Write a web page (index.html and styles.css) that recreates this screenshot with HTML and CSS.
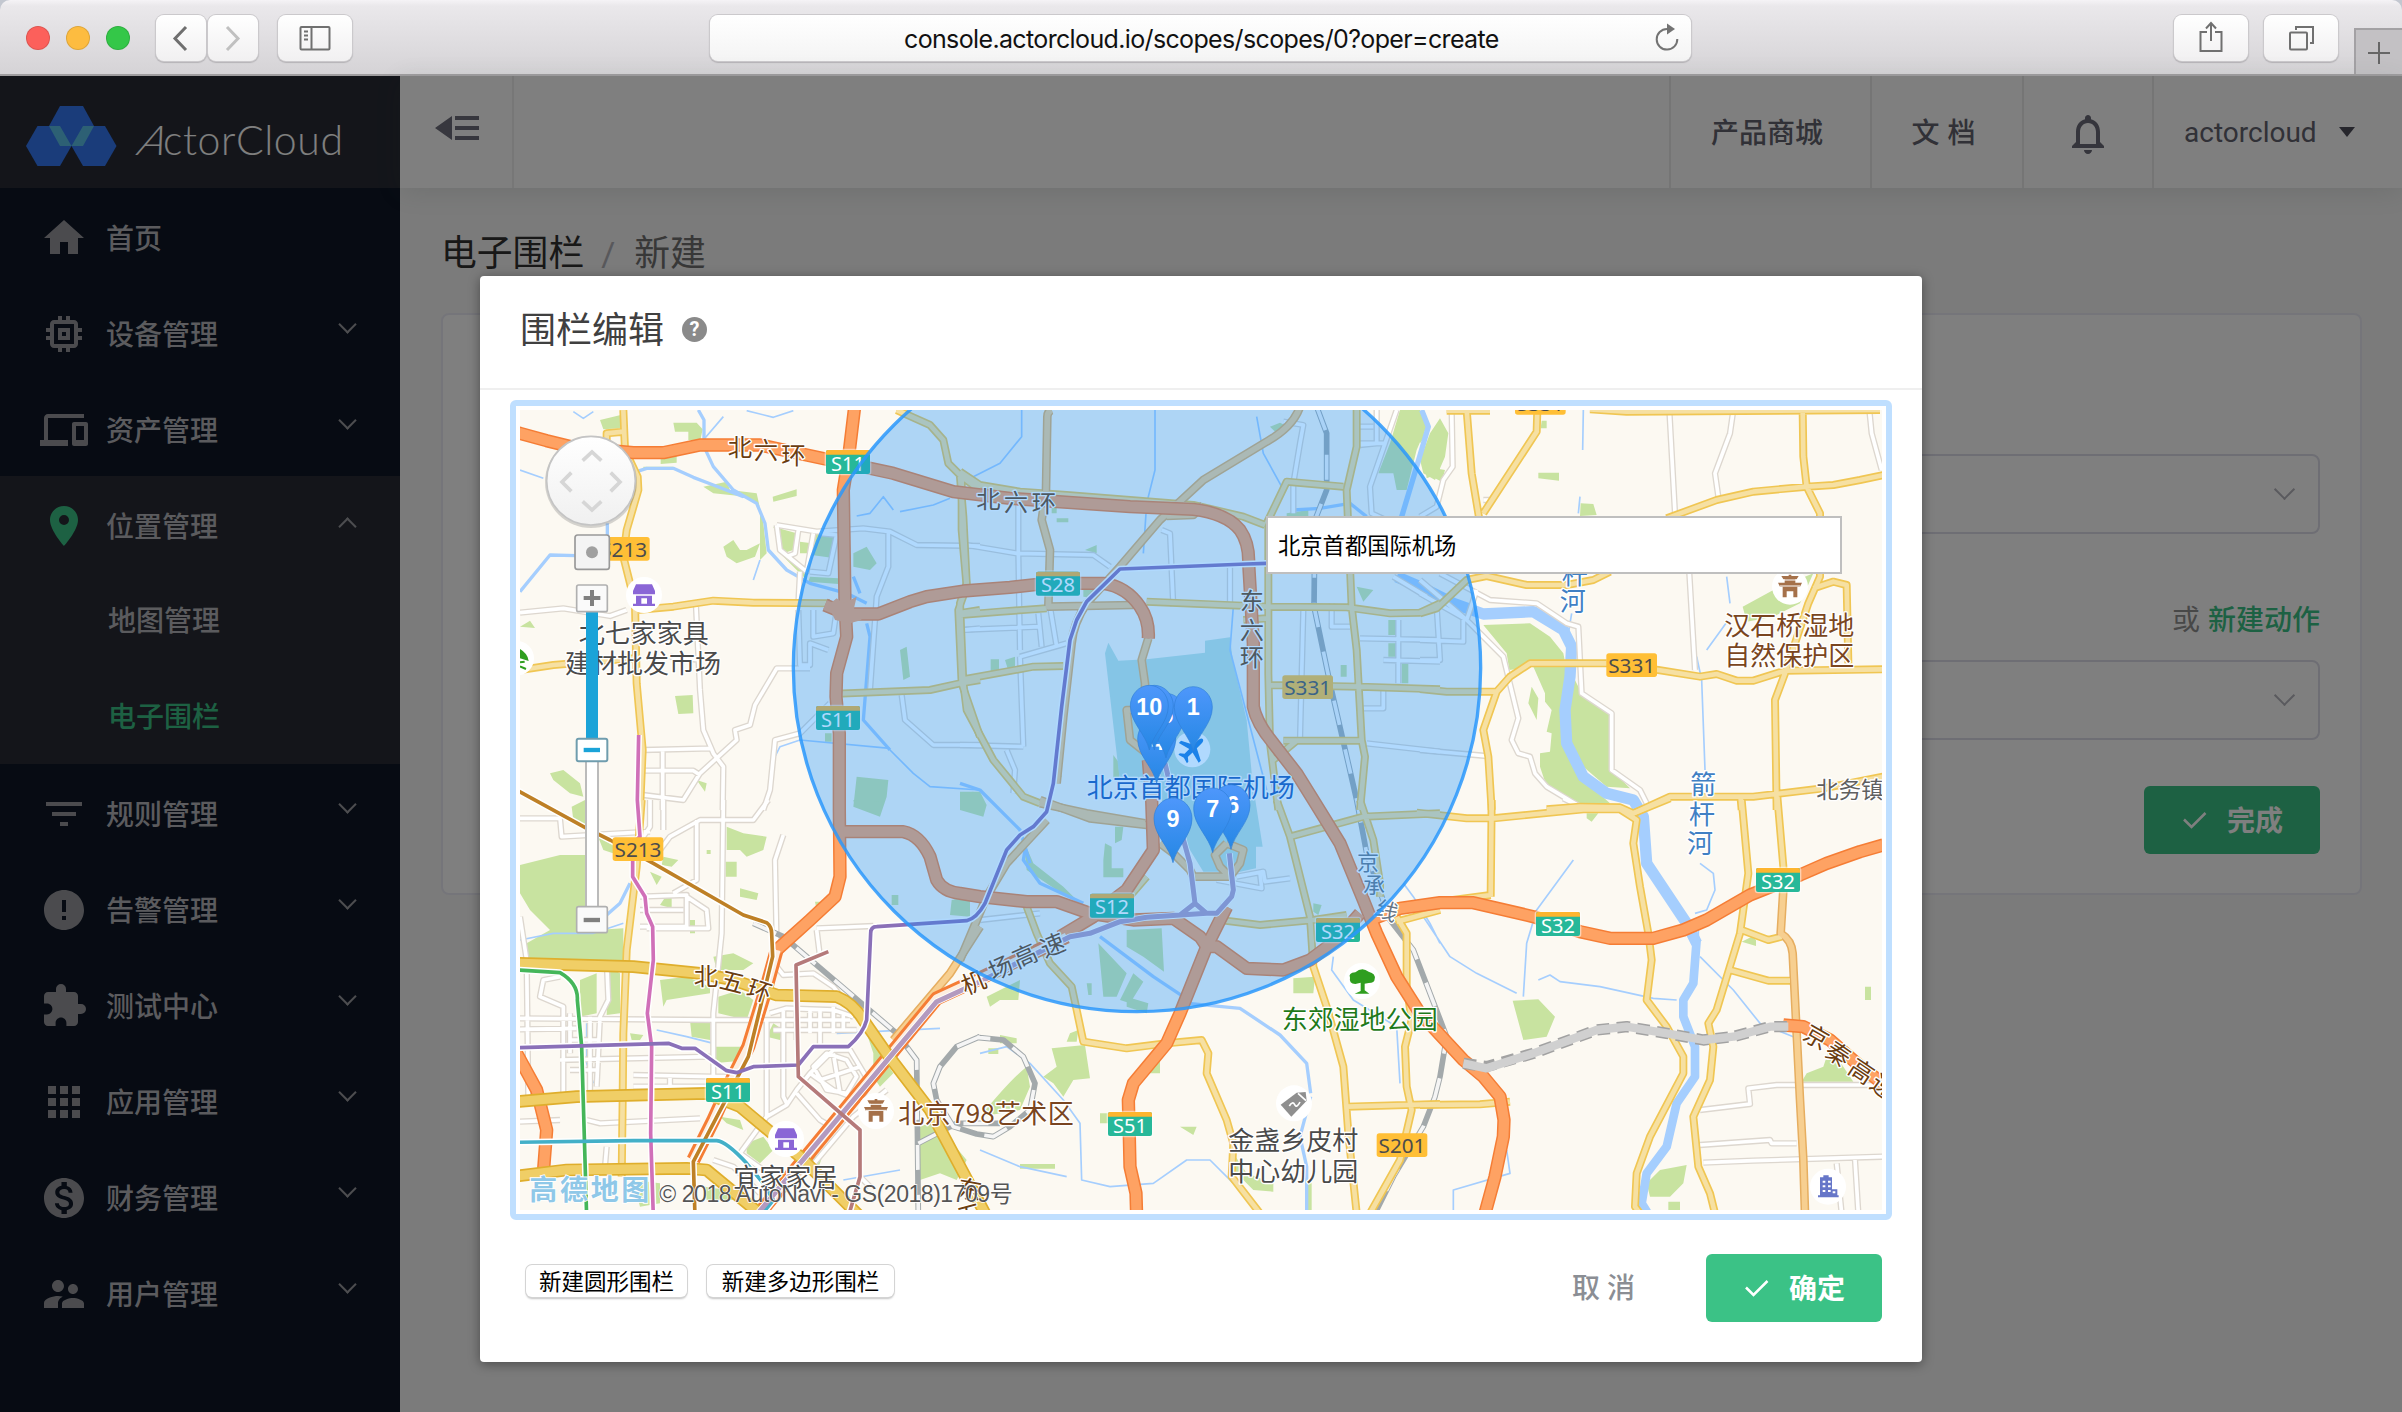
FILE: index.html
```html
<!DOCTYPE html>
<html lang="zh-CN">
<head>
<meta charset="utf-8">
<title>ActorCloud</title>
<link rel="stylesheet" href="styles.css">
</head>
<body>
<div class="window">
<header class="chrome">
  <div class="lights"><i class="red"></i><i class="amber"></i><i class="green"></i></div>
  <div class="nav-pair">
    <span class="cbtn back"><svg width="50" height="46" fill="none" stroke="#6f6f6f" stroke-width="3"><path d="M30 12 19 23.500 30 35"/></svg></span>
    <span class="cbtn"><svg width="50" height="46" fill="none" stroke="#c0c0c0" stroke-width="3"><path d="M19 12 30 23.500 19 35"/></svg></span>
  </div>
  <span class="cbtn side"><svg width="74" height="46" fill="none" stroke="#707070" stroke-width="2"><rect x="22.500" y="12" width="29" height="22.500" rx="1"/><path d="M33.500 12v22M26 16.500h4M26 20.500h4M26 24.500h4"/></svg></span>
  <div class="address"><span class="url">console.actorcloud.io/scopes/scopes/0?oper=create</span>
    <svg class="reload" width="26" height="30" fill="none" stroke="#737373" stroke-width="2"><path d="M12 6A10.300 10.300 0 1 0 22.300 16"/><path d="M12 .5v11l8-5.500z" fill="#737373" stroke="none"/></svg>
  </div>
  <div class="chrome-right">
    <span class="cbtn side"><svg width="74" height="46" fill="none" stroke="#707070" stroke-width="2"><path d="M33 17h-6.500v19h21V17H41M37 26V8M32 13.500 37 8l5 5.500"/></svg></span>
    <span class="cbtn side"><svg width="74" height="46" fill="none" stroke="#707070" stroke-width="2"><rect x="26" y="17.500" width="17" height="17" rx="1"/><path d="M32 15v-3h17v16h-3"/></svg></span>
  </div>
  <span class="newtab"><svg width="46" height="46" stroke="#666" stroke-width="2"><path d="M12 23h22M23 12v22"/></svg></span>
</header>

<div class="app">
  <aside class="sidebar">
    <div class="brand">
      <svg width="400" height="112">
        <g fill="#3478f5"><path d="M49 50 60 30H83L94 50 83 70H60Z"/><path d="M26 70 37.500 50H60L71.500 70 60 90H37.500Z"/><path d="M71.500 70 83 50H105L116.500 70 105 90H83Z"/></g>
        <path d="M49 50H60L71.500 70H60ZM94 50H83L71.500 70H83Z" fill="#5ac0e8"/>
        <g class="wordmark"><text x="135" y="79" transform="skewX(-24) translate(35 0)">A</text><text x="163" y="79" textLength="180">ctorCloud</text></g>
      </svg>
    </div>
    <nav class="menu">
      <a class="item"><svg class="ic" viewBox="0 0 24 24"><path d="M10 20v-6h4v6h5v-8h3L12 3 2 12h3v8z"/></svg><span>首页</span></a>
      <a class="item"><svg class="ic" viewBox="0 0 24 24"><path d="M15 9H9v6h6V9zm-2 4h-2v-2h2v2zm8-2V9h-2V7c0-1.100-.9-2-2-2h-2V3h-2v2h-2V3H9v2H7c-1.100 0-2 .9-2 2v2H3v2h2v2H3v2h2v2c0 1.100.9 2 2 2h2v2h2v-2h2v2h2v-2h2c1.100 0 2-.9 2-2v-2h2v-2h-2v-2h2zm-4 6H7V7h10v10z"/></svg><span>设备管理</span><i class="chev"></i></a>
      <a class="item"><svg class="ic" viewBox="0 0 24 24"><path d="M4 6h18V4H4c-1.100 0-2 .9-2 2v11H0v3h14v-3H4V6zm19 2h-6c-.55 0-1 .45-1 1v10c0 .55.45 1 1 1h6c.55 0 1-.45 1-1V9c0-.55-.45-1-1-1zm-1 9h-4v-7h4v7z"/></svg><span>资产管理</span><i class="chev"></i></a>
      <div class="open">
        <a class="item"><svg class="ic on" viewBox="0 0 24 24"><path d="M12 2C8.130 2 5 5.130 5 9c0 5.250 7 13 7 13s7-7.750 7-13c0-3.870-3.130-7-7-7zm0 9.500a2.500 2.500 0 1 1 0-5 2.500 2.500 0 0 1 0 5z"/></svg><span>位置管理</span><i class="chev up"></i></a>
        <a class="item sub">地图管理</a>
        <a class="item sub current">电子围栏</a>
      </div>
      <a class="item"><svg class="ic" viewBox="0 0 24 24"><path d="M10 18h4v-2h-4v2zM3 6v2h18V6H3zm3 7h12v-2H6v2z"/></svg><span>规则管理</span><i class="chev"></i></a>
      <a class="item"><svg class="ic" viewBox="0 0 24 24"><path d="M12 2C6.480 2 2 6.480 2 12s4.480 10 10 10 10-4.480 10-10S17.520 2 12 2zm1 15h-2v-2h2v2zm0-4h-2V7h2v6z"/></svg><span>告警管理</span><i class="chev"></i></a>
      <a class="item"><svg class="ic" viewBox="0 0 24 24"><path d="M20.500 11H19V7c0-1.100-.9-2-2-2h-4V3.500a2.500 2.500 0 0 0-5 0V5H4c-1.100 0-1.990.9-1.990 2v3.800H3.500c1.490 0 2.700 1.210 2.700 2.700s-1.210 2.700-2.700 2.700H2V20c0 1.100.9 2 2 2h3.800v-1.500c0-1.490 1.210-2.700 2.700-2.700s2.700 1.210 2.700 2.700V22H17c1.100 0 2-.9 2-2v-4h1.500a2.500 2.500 0 0 0 0-5z"/></svg><span>测试中心</span><i class="chev"></i></a>
      <a class="item"><svg class="ic" viewBox="0 0 24 24"><path d="M4 8h4V4H4v4zm6 12h4v-4h-4v4zm-6 0h4v-4H4v4zm0-6h4v-4H4v4zm6 0h4v-4h-4v4zm6-10v4h4V4h-4zm-6 4h4V4h-4v4zm6 6h4v-4h-4v4zm0 6h4v-4h-4v4z"/></svg><span>应用管理</span><i class="chev"></i></a>
      <a class="item"><svg class="ic" viewBox="0 0 24 24"><path d="M12 2C6.480 2 2 6.480 2 12s4.480 10 10 10 10-4.480 10-10S17.520 2 12 2zm1.410 16.090V20h-2.670v-1.930c-1.710-.36-3.160-1.460-3.270-3.400h1.960c.1 1.050.82 1.870 2.650 1.870 1.960 0 2.400-.98 2.400-1.590 0-.83-.44-1.610-2.670-2.140-2.480-.6-4.180-1.620-4.180-3.670 0-1.720 1.390-2.840 3.110-3.210V4h2.670v1.950c1.860.45 2.790 1.860 2.850 3.390H14.300c-.05-1.110-.64-1.870-2.220-1.870-1.500 0-2.400.68-2.400 1.640 0 .84.65 1.390 2.670 1.910s4.180 1.390 4.180 3.910c-.01 1.830-1.380 2.830-3.120 3.160z"/></svg><span>财务管理</span><i class="chev"></i></a>
      <a class="item"><svg class="ic" viewBox="0 0 24 24"><path d="M16.500 12c1.380 0 2.490-1.120 2.490-2.500S17.880 7 16.500 7 14 8.120 14 9.500s1.120 2.500 2.500 2.500zM9 11c1.660 0 2.990-1.340 2.990-3S10.660 5 9 5 6 6.340 6 8s1.340 3 3 3zm7.500 3c-1.830 0-5.500.92-5.500 2.750V19h11v-2.250c0-1.830-3.670-2.750-5.500-2.750zM9 13c-2.330 0-7 1.170-7 3.500V19h7v-2.250c0-.85.33-2.340 2.370-3.470C10.500 13.100 9.660 13 9 13z"/></svg><span>用户管理</span><i class="chev"></i></a>
    </nav>
  </aside>

  <div class="main">
    <div class="topbar">
      <span class="fold"><svg width="44" height="24" fill="#6e6e7c"><path d="M0 12 17 0V24Z M20 0h24v4H20ZM20 10h24v4H20ZM20 20h24v4H20Z"/></svg></span>
      <a class="cell shop">产品商城</a>
      <a class="cell docs">文 档</a>
      <a class="cell bell"><svg width="48" height="48" viewBox="0 0 24 24" fill="#6a6a78"><path d="M12 22c1.100 0 2-.9 2-2h-4c0 1.100.9 2 2 2zm6-6v-5c0-3.070-1.630-5.640-4.500-6.320V4c0-.83-.67-1.500-1.500-1.500s-1.500.67-1.500 1.500v.68C7.640 5.360 6 7.920 6 11v5l-2 2v1h16v-1l-2-2zm-2 1H8v-6c0-2.480 1.510-4.500 4-4.500s4 2.020 4 4.500v6z"/></svg></a>
      <a class="cell user">actorcloud<i class="caret"></i></a>
    </div>
    <div class="page">
      <h1 class="crumb">电子围栏<em>/</em><span>新建</span></h1>
      <section class="card">
        <div class="select"><i class="chev"></i></div>
        <p class="hint">或 <b>新建动作</b></p>
        <div class="select"><i class="chev"></i></div>
        <button class="primary"><svg width="24" height="18" fill="none" stroke="#fff" stroke-width="2.500"><path d="M1 8.500 8.500 16 22.500 2"/></svg><span>完成</span></button>
      </section>
    </div>
  </div>

  <div class="shade">
  <div class="modal">
    <div class="modal-head"><span>围栏编辑</span><i class="help">?</i></div>
    <div class="frame">
<svg class="map" viewBox="60 60 4086 2400" width="1362" height="800">
<defs>
<linearGradient id="pinfill" x2="0" y2="1"><stop offset="0" stop-color="#4e97fb"/><stop offset="1" stop-color="#2587e4"/></linearGradient>
<linearGradient id="knob" x2="0" y2="1"><stop offset="0" stop-color="#fff"/><stop offset="1" stop-color="#f0f0f0"/></linearGradient>
<g id="pin"><path d="M0 132C-10 85-57 50-57 0A57 62 0 0 1 57 0C57 50 10 85 0 132Z" fill="url(#pinfill)" stroke="#2f7fd8" stroke-width="2"/></g>
<g id="gs"><rect x="-4" y="-4" width="140" height="80" rx="10" fill="#fff" opacity=".5"/><rect width="132" height="72" rx="6" fill="#27b899"/><path d="M0 14V6Q0 0 6 0H126Q132 0 132 6V14Z" fill="#fdb52f"/></g>
<g id="ys"><rect width="152" height="71" rx="8" fill="#ffbf36"/></g>
<g id="shop"><circle r="54" fill="#fff"/><path d="M-24-32H24L33-12V-2H-33V-12ZM-24 2H24V26H33V33H-33V26H-24ZM-8 10V26H9V10Z" fill="#8a66d6" fill-rule="evenodd"/></g>
<g id="temple"><circle r="54" fill="#fff"/><path d="M-26-32H-4V-36H4V-32H26L20-22H16V-12H36L30 0H22V32H10V14H-10V32H-22V0H-30L-36-12H-16V-22H-20Z" fill="#a5714a"/><path d="M-30-2H30M-20-20H20" stroke="#fff" stroke-width="3"/></g>
<g id="minor">
<path d="M60 668 190 655 330 678 380 660M588 650 600 900 610 1020 640 1090 670 1130 668 1260M930 835H830L765 945 750 1005 705 1020 710 1050 600 1150 550 1230 430 1215M430 1080 635 1075M488 1080V1260M430 1142H580L600 1155M990 940 900 1030 825 1050 810 1200 790 1260M830 405 950 425 1090 415 1170 425 1250 465 1440 468M830 405 840 480 920 545 940 430M900 545 895 640M895 420 885 490 860 500M960 430 1010 435 985 550 930 545M1165 425V530L1130 620 1110 900M940 660V740L1000 730 1010 660M895 660 900 825H930V760L985 780M1440 715 1390 720M1205 915 1215 990 1300 1065H1440M510 800 600 810"/>
<path transform="translate(1380 0)" d="M20 465 170 490 400 495 450 530M175 340V490L180 780M605 420 630 430 640 650M810 530V640M0 720 240 710M180 800 320 760M180 800 190 1070M270 650 290 770M235 670 245 770M0 1065 190 1070M140 1080 165 1140 160 1210M970 95 1030 105 1020 160 1000 280V370M1250 60V160L1200 165M1200 110H1240M1280 160H1200M1310 60 1230 290 1235 370 1300 400M1030 660 1020 1050M1115 640V710H1170M1200 745 1440 750M1270 810 1440 815M1315 690V880M1200 955H1270V900M1220 1060 1440 1085M1300 560 1400 620"/>
<path transform="translate(2760 0)" d="M95 60 98 230 70 270 50 350 0 380M748 60 765 370M940 60 930 130 885 250 895 320M1348 60 1355 130 1385 240M808 550 825 840M0 570 140 690 250 800 295 985 275 1050 295 1090 330 1100 345 1150 380 1190 480 1250M60 550 210 630 350 640 440 700 475 710 485 910 575 970V1140L660 1200 685 1250M0 1080 200 1098M190 330H215M0 610 140 690 170 600M50 650 60 810H0M130 690V755L0 750"/>
<path transform="translate(0 1230)" d="M60 55H180L185 110 450 95M450 0V80L430 110M490 0V90M590 60V240L520 280M480 150 510 110 600 60H760L805 0M670 0 665 400 640 640V830M60 350 80 480 85 900M420 290 560 285V380H420M420 330H550M560 290 620 330 625 385H440M60 655 640 660H850M60 688 230 685M400 825 640 830H700M400 860H640M510 830V880M180 780 630 770M320 480 325 600 300 650 290 860M180 530 130 540 120 590 190 620V900M210 640V760M270 650V880M210 720H300M210 810H290M850 105 825 180 830 430M830 500 850 525 940 520 1000 560 1070 650M810 640 860 625 1000 630 1060 650M820 660H1050M820 690H1070M850 625V890L860 910M890 625V720M930 625V700M960 630V740M1000 620V700M1030 640V690M950 390 960 470M950 385 1120 378M800 660V950L860 915 890 870 930 820 1000 750 1050 750 1110 850 1080 900 1000 870 930 820M890 880 960 960 1010 990M940 800 980 760 1040 780 1070 830 1040 880 980 870ZM960 840 1080 800M1000 760 1020 880M60 965 180 960M260 960 300 970 600 955M320 1040 315 1100M800 950 720 1060 790 1110M900 1140 1060 950 1160 870M640 1080 700 1100 780 1180M1080 1130 1110 1160"/>
<path transform="translate(1380 1230)" d="M60 360 240 340M830 230 910 215 915 245 990 235M770 240 905 265 900 220"/>
<path transform="translate(2760 1230)" d="M840 930 990 912 985 865 1070 855H1390M840 1035 1050 1020 1055 1030H1130M850 1088 1000 1082 1390 1070M1250 1090 1265 1240M1305 1080 1315 1240M430-5 480 20"/>
</g>
<g id="second">
<path d="M370 60 375 180 413 260 415 300 380 420 370 500 405 640 410 880 428 1080 420 1260M320 170V130L370 125M410 660 520 650 640 632 760 638 990 640M60 840 160 825 400 805M1190 60 1290 105 1330 150 1345 220 1385 260 1440 300M1385 250V420L1400 590 1375 660 1385 880 1440 1040M1375 670 1440 660M990 912 1290 900 1380 880 1440 870"/>
<path transform="translate(1380 0)" d="M0 245 60 285 180 305 320 315 700 345 850 380 915 405M0 260 10 380 20 580 0 640 10 880 20 960 100 1110 190 1220 240 1240M0 675 120 665 260 655M560 635 920 650 1160 652 1290 670 1380 668 1440 640M0 870 220 830 310 828M1190 60V170L1160 300 1175 650 1190 780 1205 1050 1215 1100 1200 1260M920 400 980 275 1150 290M925 400V850L930 1060 955 1260M850 690 920 685M920 885 1200 890 1440 898M970 1052H1205M1010 1052 940 1110"/>
<path transform="translate(2760 0)" d="M140 60 155 250 180 400M352 60 350 125 190 370M80 62H210M510 58 620 65 1380 60M740 385 890 330 1000 305 1160 290 1240 285 1320 270 1390 255M1148 60 1150 200 1160 290 1200 370V560L1165 640 1095 850 1065 930 1070 1260M1180 595 1240 575 1280 585 1285 820M0 670 50 655 140 570 200 558 320 585H440L520 570 570 545M0 897 80 905H230M560 820H330L270 860 230 905 190 1020 205 1100 215 1260M560 820 715 840 840 860 890 852 950 872H1000L1095 842 1390 838M380 1258 480 1250 600 1252 640 1270 750 1220H1000L1210 1195 1390 1160M962 1225 965 1260"/>
<path transform="translate(0 1230)" d="M425 0 410 200 380 450 370 700 368 900 365 1130"/>
<path transform="translate(1380 1230)" d="M200 320 230 400 270 490 335 560 350 630 370 725 500 745 620 730 725 720 745 760 740 820 800 960 820 1030 815 1130 900 1240M950 0 990 110 1050 350 1060 500 1100 620 1150 800 1165 1000 1190 1240M990 110 1210 50 1440 40M780 360 900 375 1060 360 1160 345M1200 0 1240 120 1260 250V290M1310 350 1340 400V560L1355 660 1335 740 1340 860 1355 930 1320 1080 1230 1240M1160 920 1440 912M1310 365 1440 330M500 300 560 230"/>
<path transform="translate(2760 1230)" d="M-10 38 140 55H220L490 28H600L650 60 640 130 660 260 685 400 695 480 680 600 740 680 790 770V820L690 1010 650 1120 645 1220 660 1240M215 0 212 290M60 305 212 285M640 40 750-5M965 0 985 220 960 400 890 630 865 670 880 740 870 840 820 950 835 1100 870 1180 885 1240M1072-10 1090 200V270M965 390 1045 420 1085 410M930 510 1045 542H1110M0 915 180 913 270 905"/>
</g>
<g id="third">
<path transform="translate(1380 0)" d="M275 60Q262 65 262 80L258 300 245 390 270 480 265 650 520 645M1020 50Q1000 110 920 155L730 270 600 390 480 530 380 640Q340 700 335 760L310 980 290 1180M620 378 700 375 730 345M565 745 545 810 555 880V960H500L510 1050 560 1090M240 1240 380 1270 555 1300"/>
<path transform="translate(1380 1230)" d="M240 0 390 55 560 75M0 480 80 290 140 190 260 60M600 130 640 160 690 210 700 230H820M800 130 765 165 780 200 810 230 840 190 850 150 800 130"/>
<path transform="translate(0 1230)" d="M1440 380 1350 520 1180 720"/>
<path transform="translate(2760 1230)" d="M1090 270 1082 400Q1115 420 1118 460L1130 700 1140 900 1150 1080 1155 1240"/>
</g>
<g id="ring">
<path d="M50 1720 400 1730 600 1750 700 1770 830 1815 1010 1820Q1060 1840 1090 1890L1160 1990 1290 2160 1460 2480M50 2135 230 2120 620 2110 720 2150 900 2300 1080 2480M50 2358 200 2340 560 2335 620 2340 790 2480"/>
</g>
<g id="express">
<path d="M0 118 60 130 140 152 220 172 400 188H490L600 165H780L860 182 980 208 1110 235 1180 250 1360 305 1530 325 1890 350 2080 358Q2180 370 2220 420 2248 460 2246 520L2260 760V950Q2270 1000 2320 1060L2390 1150 2440 1230 2520 1360 2590 1530 2630 1630 2690 1760 2760 1870 2890 2010 2950 2060 3000 2120 3012 2190 3010 2240 2985 2360 2955 2470"/>
<path d="M1064 50 1046 200 1030 300 1035 640 1040 740 1010 850 1008 920 1018 1030V1260L1020 1460 1005 1520 930 1590 830 1680"/>
<path d="M975 645 1040 672H1135L1230 635 1280 620 1390 603 1530 592 1640 580H1810Q1880 590 1920 650 1948 690 1945 745"/>
<path d="M1030 1325H1210Q1260 1335 1290 1400L1310 1470Q1330 1505 1380 1510L1440 1520 1580 1535H1670L1770 1570 1900 1590 2020 1585 2100 1640 2120 1670"/>
<path d="M1945 1110 1955 1230 1960 1380 1880 1500 1840 1530 1780 1580 1680 1640"/>
<path d="M2180 1550 2120 1670 2040 1870 2000 1960 1900 2080 1885 2130 1888 2240 1890 2330 1908 2410 1910 2480M2110 1670H2150L2240 1735 2350 1740 2430 1710 2510 1650 2580 1570"/>
<path d="M2610 1590 2700 1555 2820 1538H2920L3100 1580 3240 1625 3330 1645H3460L3550 1620 3620 1590 3750 1515 3900 1455 3980 1420 4080 1385 4150 1365"/>
<path d="M50 1990 110 2100 140 2220 130 2350M3850 1905 3910 1910 3990 1950 4070 2020 4160 2090"/>
</g>
<g id="dual"><path d="M830 1680 800 1790 745 1970 690 2080 640 2190 580 2310M770 2480 1310 1825 1440 1765 1700 1640"/></g>
<g id="rail">
<path d="M2450 50 2480 130V300L2445 390 2442 650 2490 880 2570 1230 2600 1390 2670 1590 2740 1680 2840 1940 2820 2060 2805 2120 2770 2210 2680 2360 2620 2480M760 1600 850 1640 1190 1930 1250 2010 1255 2480M1440 1940 1370 1970 1320 2030 1300 2080 1310 2130 1360 2210 1430 2232 1480 2240 1530 2210 1590 2160 1605 2080 1570 2000 1510 1950 1430 1942M1255 2260 1370 2200 1500 2200"/>
</g>
</defs>
<rect x="60" y="60" width="4086" height="2400" fill="#fcf9f2"/>
<g fill="#c8e3a0">
<path d="M300 90 362 75V115L310 118ZM520 98H590L608 118 600 155 565 150V125H525ZM482 198 530 190V218L482 222ZM610 290 680 275 690 300 770 310 790 400 800 490 780 510V350L740 320 640 310ZM818 320 890 298V318L820 335ZM670 470 700 450 720 480H740L780 460 765 500 710 520 680 500ZM820 410 890 430 880 480 850 490ZM840 490 870 500 920 540V570ZM900 455 935 460 925 490H900ZM945 430H1005V505L935 495ZM1060 490 1100 470 1130 520 1110 540 1060 530ZM525 918 578 915 580 970 535 972ZM150 1150 190 1140 240 1180 250 1220 210 1210 160 1170ZM60 710 90 692 105 714ZM590 1170 620 1180 615 1205ZM1070 1160 1165 1170 1160 1220 1140 1280 1060 1250ZM1380 1210 1420 1205 1450 1255 1380 1260ZM1200 780 1220 770 1230 860 1210 870ZM930 560 1015 565V582L925 575ZM430 240H520V230H430ZM975 1030H995V1055H975Z"/>
<path transform="translate(1380 0)" d="M1320 60H1380L1400 110 1370 180 1340 300 1310 300 1300 250H1255L1290 160ZM1390 200 1440 150V250L1400 265ZM930 110 960 98 980 108 950 130ZM275 350H290V370H275ZM290 385H325V397H290ZM92 808H117V848H92ZM135 810 165 800V830L145 842ZM1285 690H1310V735H1285ZM1285 760H1307V800H1285ZM1325 820H1345V880H1325ZM1142 825H1160V860H1142ZM375 480 410 465V490ZM460 1095 475 1115 480 1185 460 1165ZM0 1205H60L80 1245 70 1280 0 1260ZM1190 590 1240 600 1210 635ZM570 628H635V640H570ZM370 600 410 590V625L370 620ZM980 370 1045 360V380H980ZM295 1110 305 1160 290 1180Z"/>
<path transform="translate(2760 0)" d="M190 705 330 700 390 740 430 790 440 840 425 960 440 1090 480 1160 570 1240 470 1250 380 1190 360 1130V1090L390 1085 395 1030 380 1025 395 960 375 935V910L340 830 268 840 260 790ZM460 860 490 920 570 970 575 1140 630 1195 560 1190 490 1130 450 1050 445 960ZM335 890 355 925 350 990 325 940ZM60 85 85 130 75 200 45 270 10 250 0 210 30 130ZM45 235 75 240 65 275 45 265ZM0 90 15 140 0 160ZM355 248H417V272L355 265ZM482 340 520 342 530 375 480 378ZM968 650 1060 600 1180 550 1140 640 1060 680 980 695ZM365 92H380V115H362Z"/>
<path transform="translate(0 1230)" d="M60 195 180 165H255V370L290 390 370 385V480H80V430L150 390 90 330 60 280ZM215 20 255 0V80L220 60ZM290 100 340 120 370 170 310 150ZM680 80 730 100 800 110 790 150 740 170 720 150H680ZM677 185H710V230H677ZM720 265 775 280 770 300 720 290ZM500 285H515V325L480 315ZM570 360H585V400H570ZM450 215 485 230 470 255ZM490 170 535 180 515 200 485 195ZM945 305H975L950 330ZM480 540 560 530 630 560V580L500 600 490 620ZM570 660H630V720L575 710ZM655 590 720 570 760 600 740 660 655 640ZM820 670 850 690 840 720 800 710ZM240 540 290 520V640L240 650ZM325 500 360 520V640L320 645ZM390 700 430 705 420 720H395ZM640 470 700 460 760 490 730 510H650ZM1100 700 1180 820 1140 860 1120 830V760ZM660 950 720 960 730 990 680 970ZM740 1030 790 1010 820 1050 780 1090 740 1060ZM920 1080 970 1060 950 1120ZM1060 0 1145 5 1140 45 1065 20ZM1175 285H1195V315H1175ZM1355 300 1410 290V350L1350 345ZM1260 980 1310 960 1350 1020 1400 1080 1370 1140 1320 1120 1260 1140ZM640 740H760L750 780 640 790ZM400 1140 480 1150V1210L420 1220ZM620 150H632V162H620ZM615 1160 680 1170 700 1200H620Z"/>
<path transform="translate(1380 1230)" d="M275 745 375 735 390 835 340 840 310 890 280 850 250 830 290 800ZM200 800 210 860 180 930 60 950Q150 840 200 800ZM80 590 180 540 175 600 120 600 90 620ZM120 705 170 715V730H120ZM330 700 355 690 350 725H320ZM85 745H115V762H85ZM500 390 605 385 612 515 550 470 500 440ZM415 430 500 520 470 590 430 590ZM520 520 550 545 510 610 480 600ZM500 590 565 610 560 640 500 620ZM190 120 220 190 310 260 360 310 290 270 200 210ZM465 80H490L485 120 465 130ZM435 130 455 140V205H490V232H430V180ZM1000 535 1065 530 1060 580H1000ZM570 780H600V820H565ZM660 980H710L700 1005ZM420 940H445V970H420ZM820 1060 860 1120 940 1150V1175L880 1170 820 1110ZM180 1092H285V1106H180ZM1060 310 1085 315 1075 345 1060 335ZM1035 1150H1055V1240H1035ZM380 550H395V585H385Z"/>
<path transform="translate(2760 1230)" d="M278 602 355 598 405 650 380 710 310 720ZM470 0H550L510 20ZM500 40H535L515 65 500 55ZM965 425 995 410 1008 420V438ZM1335 560H1353V600H1335ZM1145 845 1160 820 1210 800 1230 740 1300 845ZM680 1150 720 1110 800 1095 790 1150 750 1190H690ZM745 1205H780V1235H745Z"/>
</g>
<path d="M1815 790 1825 758 1855 812 1940 808 2115 788V752L2190 742 2198 810 2240 990 2258 1180 2288 1370H2268V1435L2220 1445H2110L2070 1380 2010 1260 1940 1180 1858 1160Z" fill="#bee1db"/>
<g fill="none" stroke="#a5cefe" stroke-linejoin="round">
<path stroke-width="34" d="M2690 560 2760 590 2860 640 2950 672 3100 665 3190 720 3215 770 3210 860 3195 960 3200 1060 3250 1160 3320 1210 3400 1230 3430 1280 3440 1420 3500 1510 3560 1600 3590 1660"/>
<path stroke-width="26" d="M3590 1650 3580 1780 3550 1830V1880L3585 1970V2060L3530 2140 3500 2270 3440 2350 3425 2440 3450 2480"/>
<path stroke-width="16" d="M2765 60 2785 110 2750 230 2705 380"/>
<path stroke-width="10" d="M595 60 612 90V170L640 230 700 300 770 340 795 400 805 480 860 540 930 580 1040 610 1100 640M1100 700 1110 740 1090 990 1170 1080M410 245 440 235H520L580 262 640 285 730 320M1060 560 1080 610M2065 1840 2220 1855 2340 1935 2420 2020 2432 2110M1800 1640 1960 1760 2050 1820M1580 1350 1570 1410 1620 1480 1750 1540M1380 1180 1440 1200 1560 1320 1590 1420M2380 360 2460 355 2550 340 2600 380M60 605 150 495 230 497M322 400V440M320 1575 360 1540 390 1480M2432 2120 2400 2240 2420 2330V2470"/>
<path stroke-width="5" d="M220 65 250 85 280 65M610 150 670 80M740 62 820 82 880 62M1070 378 1110 370 1150 320 1180 360M1200 365 1300 345 1350 325M60 240 130 265M760 570 780 510M1170 1080 1240 1150 1290 1190 1440 1200M60 1650 160 1630 280 1630 370 1600M820 1110 840 1070 900 1050 1170 1075M1565 60V140L1500 220 1420 260M1965 60V240L1940 340 1930 490M2270 80 2290 190 2345 290M2200 650 2190 780 2300 1200M3250 60 3248 180M3240 320 3235 370M3215 670 3205 730M3680 560 3690 640M3685 690 3620 780M3590 800 3605 870 3615 1140M3600 1420 3640 1450 3645 1500 3620 1560 3585 1570M3220 1410 3110 1560 3080 1660 3070 1820M2770 1580 2850 1700 2930 1750 3050 1810M3115 1770 3150 1755 3180 1775 3300 1790 3460 1825 3530 1830M3600 1700 3700 1800 3780 1900 3880 1940M3595 1600V1700M3020 2280 3030 2350 2860 2400V2470M1440 1990 1520 1970 1590 2020 1690 2130 1740 2200 1745 2370 1830 2390 1960 2380 2060 2310H2130L2210 2390M1440 2280 1560 2330 1700 2360M2500 1700 2495 1740 2560 1830 2690 1910 2700 2080M2710 1480 2740 1520 2790 1600 2820 1660M470 1920 560 1940 640 1960M1010 1930 1320 1915M260 1900V2020L280 2080M1030 2370 1200 2340"/>
</g>
<use href="#minor" class="ln minor-case"/><use href="#minor" class="ln minor-core"/>
<use href="#rail" class="ln rail-case"/><use href="#rail" class="ln rail-core"/>
<use href="#second" class="ln second-case"/><use href="#third" class="ln third-case"/>
<use href="#second" class="ln second-core"/><use href="#third" class="ln third-core"/>
<use href="#express" class="ln ex-case"/><use href="#dual" class="ln dual-case"/>
<use href="#express" class="ln ex-core"/><use href="#dual" class="ln dual-core"/>
<use href="#ring" class="ln ring-case"/><use href="#ring" class="ln ring-core"/>
<path d="M985 645 1010 625 1030 640 1070 620 1062 655 1085 690 1050 700 1005 690Z" fill="#fea263"/>
<g class="ln"><path d="M2890 2020 2960 2030 3100 1990 3290 1920 3380 1910 3500 1930 3610 1950 3700 1940 3810 1910H3865" stroke="#a2a2a2" stroke-width="34" stroke-dasharray="38 22"/><path d="M2890 2020 2960 2035 3100 1990 3290 1920 3380 1910 3500 1930 3610 1950 3700 1940 3810 1910H3865" stroke="#d0d0d0" stroke-width="25"/></g>
<g class="ln" stroke="#fff" stroke-width="20">
<path d="M50 1200 260 1315 330 1350 460 1420 730 1575 800 1598Q815 1610 815 1630L818 1700 745 2000 580 2315 585 2480"/>
<path d="M416 1035 412 1230 420 1340 398 1360V1460L435 1520 440 1570 458 1610 460 1710 442 1870 455 1970 452 2230 460 2480"/>
<path d="M50 1740 180 1748Q235 1780 232 1830L245 1970 260 2480"/>
<path d="M50 1973 505 1960 545 1975H585L680 2042 710 2048 760 2030 895 2025 940 1970H1045Q1090 1930 1100 1890L1112 1630Q1112 1610 1130 1610L1400 1592Q1430 1585 1455 1540L1520 1380 1560 1335 1600 1310 1640 1265 1660 1180 1685 950 1710 750 1730 690 1760 635 1860 537 2240 522 2300 520"/>
<path d="M50 2257 400 2252H650Q680 2255 740 2320L790 2380 820 2430 780 2480"/>
<path d="M985 1685 888 1725 895 2060 1080 2220V2360L1045 2480"/>
<path d="M765 2480 1310 1835 1440 1775 1710 1640 1770 1630 1860 1595 1940 1582 2120 1570H2150L2195 1520 2200 1500 2188 1390M2040 1575 2085 1540 2120 1570M2085 1540 2070 1420 2045 1330 1995 1120"/>
</g>
<g fill="none" stroke-linejoin="round" stroke-width="11">
<path stroke="#be8026" d="M50 1200 260 1315 330 1350 460 1420 730 1575 800 1598Q815 1610 815 1630L818 1700 745 2000 580 2315 585 2480"/>
<path stroke="#d070b8" d="M416 1035 412 1230 420 1340 398 1360V1460L435 1520 440 1570 458 1610 460 1710 442 1870 455 1970 452 2230 460 2480"/>
<path stroke="#45b65a" d="M50 1740 180 1748Q235 1780 232 1830L245 1970 260 2480"/>
<path stroke="#8a70b8" d="M50 1973 505 1960 545 1975H585L680 2042 710 2048 760 2030 895 2025 940 1970H1045Q1090 1930 1100 1890L1112 1630Q1112 1610 1130 1610L1400 1592Q1430 1585 1455 1540L1520 1380 1560 1335 1600 1310 1640 1265 1660 1180 1685 950 1710 750 1730 690 1760 635 1860 537 2240 522 2300 520"/>
<path stroke="#43b0c8" d="M50 2257 400 2252H650Q680 2255 740 2320L790 2380 820 2430 780 2480"/>
<path stroke="#b39abf" stroke-width="15" d="M765 2480 1310 1835 1440 1775 1710 1640 1770 1630 1860 1595 1940 1582 2120 1570H2150L2195 1520 2200 1500 2188 1390M2040 1575 2085 1540 2120 1570M2085 1540 2070 1420 2045 1330 1995 1120"/>
<path stroke="#b57a7a" d="M985 1685 888 1725 895 2060 1080 2220V2360L1045 2480"/>
</g>
<g class="gsh">
<g transform="translate(978 180)"><use href="#gs"/><text x="66" y="62">S11</text></g>
<g transform="translate(948 948)"><use href="#gs"/><text x="66" y="62">S11</text></g>
<g transform="translate(618 2064)"><use href="#gs"/><text x="66" y="62">S11</text></g>
<g transform="translate(1608 545)"><use href="#gs"/><text x="66" y="62">S28</text></g>
<g transform="translate(1770 1511)"><use href="#gs"/><text x="66" y="62">S12</text></g>
<g transform="translate(2448 1584)"><use href="#gs"/><text x="66" y="62">S32</text></g>
<g transform="translate(1824 2166)"><use href="#gs"/><text x="66" y="62">S51</text></g>
<g transform="translate(3108 1566)"><use href="#gs"/><text x="66" y="62">S32</text></g>
<g transform="translate(3768 1434)"><use href="#gs"/><text x="66" y="62">S32</text></g>
</g>
<g class="ysh">
<g transform="translate(297 441)"><use href="#ys"/><text x="74" y="59">S213</text></g>
<g transform="translate(338 1342)"><use href="#ys"/><text x="76" y="59">S213</text></g>
<g transform="translate(2347 856)"><use href="#ys"/><text x="76" y="59">S331</text></g>
<g transform="translate(3319 790)"><use href="#ys"/><text x="76" y="59">S331</text></g>
<g transform="translate(2630 2230)"><use href="#ys"/><text x="76" y="59">S201</text></g>
<g transform="translate(3045 3)"><use href="#ys"/><text x="76" y="59">S331</text></g>
</g>
<g class="lb road">
<text x="720" y="198">北</text><text x="798" y="206">六</text><text x="880" y="222">环</text>
<text x="1465" y="355">北</text><text x="1548" y="362">六</text><text x="1632" y="366">环</text>
<text x="2256" y="660">东</text><text x="2256" y="746">六</text><text x="2256" y="828">环</text>
<text x="618" y="1785">北</text><text transform="translate(690 1801) rotate(14)">五</text><text transform="translate(770 1828) rotate(18)">环</text>
<text transform="translate(1430 1802) rotate(-22)">机</text><text transform="translate(1512 1758) rotate(-24)">场</text><text transform="translate(1586 1722) rotate(-24)">高</text><text transform="translate(1668 1690) rotate(-22)">速</text>
<text transform="translate(3936 1964) rotate(30)">京</text><text transform="translate(4000 2014) rotate(34)">秦</text><text transform="translate(4070 2066) rotate(34)">高</text><text transform="translate(4134 2112) rotate(36)">速</text>
<text transform="translate(1405 2425) rotate(10)">东</text><text transform="translate(1415 2500) rotate(-15)">五</text>
</g>
<g class="lb railname"><text x="2604" y="1440">京</text><text x="2622" y="1508">承</text><text transform="translate(2652 1585) rotate(20)">线</text></g>
<g class="lb river"><text x="3224" y="582">杆</text><text x="3218" y="664">河</text><text x="3610" y="1212">箭</text><text x="3606" y="1302">杆</text><text x="3600" y="1390">河</text></g>
<g class="lb place">
<text x="236" y="758">北七家家具</text><text x="195" y="848">建材批发市场</text>
<text x="700" y="2390">宜家家居</text>
<text x="2185" y="2280">金盏乡皮村</text><text x="2185" y="2372">中心幼儿园</text>
<text x="3949" y="1225" class="town">北务镇</text>
<text x="1195" y="2199" class="brown" textLength="526">北京798艺术区</text>
<text x="3673" y="736" class="brown">汉石桥湿地</text><text x="3673" y="826" class="brown">自然保护区</text>
<text x="2345" y="1917" class="park">东郊湿地公园</text>
<text x="1760" y="1220" class="air">北京首都国际机场</text>
</g>
<use href="#shop" x="432" y="615"/><use href="#shop" x="858" y="2247"/>
<use href="#temple" x="1128" y="2163"/><use href="#temple" x="3870" y="590"/>
<g transform="translate(2586 1773)"><circle r="54" fill="#fff"/><path d="M-4 5-20 9Q-40 8-36-10-42-24-20-26 0-44 20-28 42-22 38-6 38 6 20 6L8 8 8 28 22 38H-22L-4 30Z" fill="#2f9e1f"/></g>
<g transform="translate(2382 2140)"><circle r="54" fill="#fff"/><path d="M-40 4 8-32 35-34 38-8-8 40Z" fill="#8f8f8f"/><path d="M-14 8Q-4-8 2 4T18-4M12-30 36-8" stroke="#fff" stroke-width="5" fill="none"/></g>
<g transform="translate(3984 2390)"><circle r="54" fill="#fff"/><path d="M-24-28H-14V-34H2V-28H12V8H28V26H32V32H-30V26H-24Z" fill="#6676c8"/><path d="M-16-18h8v6h-8ZM0-18h8v6h-8ZM-16-4h8v6h-8ZM0-4h8v6h-8ZM-16 10h8v6h-8ZM0 10h8v6h-8ZM14 14h8v6h-8Z" fill="#fff"/></g>
<g transform="translate(50 805)"><circle r="52" fill="#fff"/><path d="M10-28Q34-14 36 8L10 0Z" fill="#2f9e1f"/><path d="M10 12 24 10M10 24 28 32" fill="none" stroke="#2f9e1f" stroke-width="6"/></g>
<g transform="translate(2077 1078)"><circle r="54" fill="#fff"/><path transform="rotate(45)" d="M0-44Q7-44 7-30V-12L42 6V15L7 6V26L18 35V41L0 36-18 41V35L-7 26V6L-42 15V6L-7-12V-30Q-7-44 0-44Z" fill="#1c7be0"/></g>
<circle cx="1911" cy="834" r="1031" fill="#1791fc" fill-opacity=".34" stroke="#2a98fb" stroke-opacity=".85" stroke-width="10"/>
<g class="pins">
<use href="#pin" x="1970" y="1047"/><text x="1974" y="1080">4</text>
<use href="#pin" x="1998" y="972"/><text x="2000" y="998">5</text>
<use href="#pin" x="1963" y="948"/><use href="#pin" x="1948" y="948"/><text x="1948" y="976">10</text>
<use href="#pin" x="2080" y="952"/><text x="2080" y="976">1</text>
<use href="#pin" x="2193" y="1246"/><text x="2198" y="1270">6</text>
<use href="#pin" x="2138" y="1256"/><text x="2138" y="1282">7</text>
<use href="#pin" x="2019" y="1286"/><text x="2019" y="1312">9</text>
</g>
<g class="ctl">
<circle cx="273" cy="276" r="138" fill="#777" opacity=".3"/><circle cx="273" cy="272" r="133" fill="url(#knob)" stroke="#c4c4c4" stroke-width="5"/>
<path d="M248 212 276 186 304 212M248 334 276 360 304 334M214 248 186 276 214 304M332 248 360 276 332 304" fill="none" stroke="#d6d6d6" stroke-width="11"/>
<rect x="225" y="435" width="103" height="103" rx="8" fill="#f4f4f4" stroke="#999" stroke-width="5"/><circle cx="276" cy="487" r="18" fill="#a0a0a0"/>
<rect x="258" y="1100" width="36" height="460" fill="#fff" stroke="#bbb" stroke-width="6"/>
<rect x="258" y="660" width="36" height="390" fill="#1ba3d8"/>
<rect x="230" y="585" width="92" height="80" rx="6" fill="#fafafa" stroke="#b0b0b0" stroke-width="5"/><path d="M251 624H301M276 600V648" stroke="#808080" stroke-width="12"/>
<rect x="230" y="1046" width="92" height="68" rx="6" fill="#fff" stroke="#6f9dae" stroke-width="6"/><path d="M251 1080H300" stroke="#1ba3d8" stroke-width="13"/>
<rect x="230" y="1550" width="92" height="78" rx="6" fill="#fafafa" stroke="#b0b0b0" stroke-width="5"/><path d="M251 1590H300" stroke="#808080" stroke-width="13"/>
</g>
<text class="amap" x="88" y="2431" textLength="360">高德地图</text>
<text class="copy" x="478" y="2435" textLength="1060">© 2018 AutoNavi - GS(2018)1709号</text>
</svg>
      <div class="search">北京首都国际机场</div>
    </div>
    <div class="modal-foot">
      <button class="mini">新建圆形围栏</button><button class="mini wide">新建多边形围栏</button>
      <span class="cancel">取 消</span>
      <button class="primary"><svg width="24" height="18" fill="none" stroke="#fff" stroke-width="2.500"><path d="M1 8.500 8.500 16 22.500 2"/></svg><span>确定</span></button>
    </div>
  </div>
  </div>
</div>
</div>
</body>
</html>
```
FILE: styles.css
```css
* { box-sizing: border-box; }
body { margin: 0; background: #c3c7d0; font-family: Roboto, "Noto Sans CJK SC", sans-serif; }
svg { display: block; }
button { font: inherit; border: 0; margin: 0; }
i, em { font-style: normal; }
.window { width: 2402px; height: 1412px; overflow: hidden; border-radius: 10px 10px 0 0; }

/* browser toolbar */
.chrome { height: 76px; display: flex; align-items: flex-start; position: relative; padding: 15px 0 0 26px; background: linear-gradient(#f5f3f6 0, #eae8eb 6px, #d5d3d6); border-bottom: 2px solid #9f9d9f; }
.lights { display: flex; gap: 16px; margin-top: 11px; width: 130px; }
.lights i { width: 24px; height: 24px; border-radius: 50%; border: 1px solid rgba(0,0,0,.12); }
.red { background: #fc605b; } .amber { background: #fdbc40; } .green { background: #34c748; }
.nav-pair { display: flex; gap: 2px; margin-right: 20px; }
.cbtn { width: 50px; height: 46px; border-radius: 8px; background: linear-gradient(#fff, #f1f0f1); box-shadow: 0 0 0 1px #cbc9cc, 0 1px 1px 1px #b5b3b6; }
.cbtn.side { width: 74px; }
.address { margin-left: 358px; width: 981px; height: 46px; border-radius: 8px; background: linear-gradient(#fff, #f4f4f4); box-shadow: 0 0 0 1px #cbc9cc, 0 1px 1px 1px #b5b3b6; display: flex; align-items: center; justify-content: space-between; padding: 0 10px 0 194px; }
.url { font: 25px/48px Inter, sans-serif; letter-spacing: -.64px; color: #111; white-space: nowrap; padding-top: 2px; }
.chrome-right { display: flex; gap: 16px; margin-left: 483px; }
.newtab { margin: 13px 0 0 16px; width: 48px; height: 46px; background: #c3c1c4; border-left: 2px solid #a3a1a4; border-top: 2px solid #a3a1a4; flex: none; }

/* application shell */
.app { position: relative; height: 1336px; display: flex; background: #f6f6f6; }
.sidebar { width: 400px; flex: none; background: #0e1626; }
.brand { height: 112px; background: #282b35; }
.wordmark { font: 300 41px Lato, sans-serif; fill: #fff; }
.item { height: 96px; display: flex; align-items: center; padding: 4px 43px 0 40px; font-size: 28px; font-weight: 500; color: #b6b7bc; }
.item span { margin-top: -3px; }
.ic { width: 48px; height: 48px; fill: #96979c; margin-right: 18px; }
.ic.on { fill: #3bc286; }
.item .chev { margin-left: auto; }
.chev { width: 13px; height: 13px; border: solid #9a9ba0; border-width: 0 2px 2px 0; transform: translate(-3px, -10px) rotate(45deg); }
.chev.up { transform: translate(-3px, 0) rotate(225deg); }
.open { background: #282b35; }
.item.sub { padding: 0 0 3px 108px; }
.item.current { color: #3bc286; }
.main { flex: 1; min-width: 0; display: flex; flex-direction: column; }
.topbar { height: 112px; background: #fff; display: flex; justify-content: flex-end; box-shadow: 0 4px 24px rgba(60,80,70,.12); color: #62626e; font-size: 28px; font-weight: 500; position: relative; }
.fold { width: 114px; border-right: 2px solid #efefef; margin-right: auto; padding: 40px 0 0 35px; }
.cell { border-left: 2px solid #ebebeb; display: flex; align-items: center; justify-content: center; }
.shop { width: 201px; padding: 0 7px 2px 0; } .docs { width: 152px; padding: 0 7px 2px 0; word-spacing: 1px; } .bell { width: 130px; padding: 4px 0 0 0; }
.user { width: 250px; justify-content: flex-start; padding-left: 30px; font-weight: 400; }
.caret { border: 8px solid transparent; border-top: 10px solid #4c4c58; border-bottom: 0; margin-left: 22px; }
.page { padding: 43px 40px 0 41px; }
.crumb { margin: 0; font-size: 35.800px; line-height: 46px; font-weight: 400; color: #303030; }
.crumb em { color: #b0b0b6; margin: 0 19px 0 17px; font-size: 34px; }
.crumb span { color: #707070; }
.card { margin-top: 36px; height: 582px; border: 2px solid #ebebf4; border-radius: 8px; background: #fff; display: flex; flex-direction: column; align-items: flex-end; padding: 139px 40px 0; }
.select { width: 100%; height: 80px; border: 2px solid #dcdce8; border-radius: 8px; display: flex; align-items: center; justify-content: flex-end; padding-right: 24px; flex: none; }
.select .chev { width: 15px; height: 15px; border-color: #b4b4bc; transform: translate(-2px, -5px) rotate(45deg); }
.hint { margin: 74px 0 27px; height: 25px; line-height: 25px; font-size: 28px; color: #909090; display: flex; gap: 8px; align-items: center; }
.hint b { font-weight: 500; color: #3bc286; }
.primary { width: 176px; height: 68px; border-radius: 6px; background: #3bc286; color: #fff; font-size: 28px; font-weight: 700; display: flex; align-items: center; justify-content: center; gap: 20px; padding: 0 0 0 2px; flex: none; }
.primary span { margin-top: -3px; }
.card .primary { margin-top: 46px; }

/* dialog */
.shade { position: absolute; inset: 0; background: rgba(0,0,0,.5); padding: 200px 0 0 480px; }
.modal { width: 1442px; height: 1086px; background: #fff; border-radius: 4px; box-shadow: 0 2px 12px rgba(0,0,0,.4); }
.modal-head { height: 114px; border-bottom: 2px solid #efefef; display: flex; align-items: center; padding: 0 0 6px 40px; font-size: 36px; color: #404040; gap: 18px; }
.modal-head span { margin-top: -5px; }
.help { width: 25px; height: 25px; border-radius: 50%; background: #8a8a8a; color: #fff; font: 700 20px/25px Roboto, sans-serif; text-align: center; }
.frame { position: relative; width: 1382px; height: 820px; margin: 10px 0 0 30px; border: 6px solid #bfdfff; border-radius: 6px; padding: 4px; }
.search { position: absolute; left: 750px; top: 110px; width: 576px; height: 58px; border: 2px solid #bfbfbf; background: #fff; font-size: 22.300px; line-height: 56px; padding-left: 10px; color: #000; }
.modal-foot { display: flex; padding: 34px 40px 0 46px; }
.mini { margin-top: 11px; width: 161px; height: 32px; border-radius: 6px; background: #fff; box-shadow: 0 0 0 1px #d4d4d4, 0 2px 2px #c4c4c4; font-size: 22.500px; line-height: 34px; padding: 0; white-space: nowrap; color: #000; }
.mini.wide { width: 187px; margin-left: 20px; }
.cancel { margin: 0 71px 0 auto; font-size: 28px; font-weight: 500; line-height: 69px; color: #8b8e94; }

/* map */
.ln { fill: none; stroke-linejoin: round; }
.minor-case { stroke: #ddd7cf; stroke-width: 19px; } .minor-core { stroke: #fff; stroke-width: 11px; }
.second-case { stroke: #f0c653; stroke-width: 24px; } .second-core { stroke: #f6e0a2; stroke-width: 14px; }
.third-case { stroke: #e6ae60; stroke-width: 26px; } .third-core { stroke: #f7cf90; stroke-width: 17px; }
.ex-case { stroke: #f57d35; stroke-width: 40px; } .ex-core { stroke: #fea263; stroke-width: 31px; }
.dual-case { stroke: #f57d35; stroke-width: 42px; } .dual-core { stroke: #fdeee0; stroke-width: 24px; }
.ring-case { stroke: #dfae2c; stroke-width: 38px; } .ring-core { stroke: #f0ce66; stroke-width: 28px; }
.rail-case { stroke: #a3a9ab; stroke-width: 17px; } .rail-core { stroke: #f5f5f5; stroke-width: 11px; stroke-dasharray: 75px 75px; }
.gsh text, .ysh text { font: 60px "Noto Sans", sans-serif; text-anchor: middle; fill: #fff; }
.ysh text { fill: #4c4c4c; font-size: 62px; }
.lb text { font-family: "Noto Sans CJK SC", sans-serif; font-size: 73px; text-anchor: middle; paint-order: stroke; stroke: #fff; stroke-width: 8px; stroke-linejoin: round; }
.road text { fill: #6b3d10; }
.lb.railname text { fill: #687685; font-size: 66px; }
.lb.river text { fill: #4080c4; font-size: 78px; }
.lb.place text { text-anchor: start; font-size: 78px; fill: #4a4a4a; }
.lb.place .town { font-size: 67px; fill: #606060; }
.lb.place .brown { fill: #7a4520; } .lb.place .park { fill: #1f7a1a; } .lb.place .air { fill: #1a55b4; }
.pins text { font: 700 70px "Liberation Sans", sans-serif; fill: #fff; text-anchor: middle; }
.amap { font: 700 84px "Noto Sans CJK SC", sans-serif; fill: #8fc8e8; stroke: #fff; stroke-width: 5px; paint-order: stroke; }
.copy { font: 69px "Liberation Sans", "Noto Sans CJK SC", sans-serif; fill: #555; stroke: #fff; stroke-width: 4px; paint-order: stroke; }
```
